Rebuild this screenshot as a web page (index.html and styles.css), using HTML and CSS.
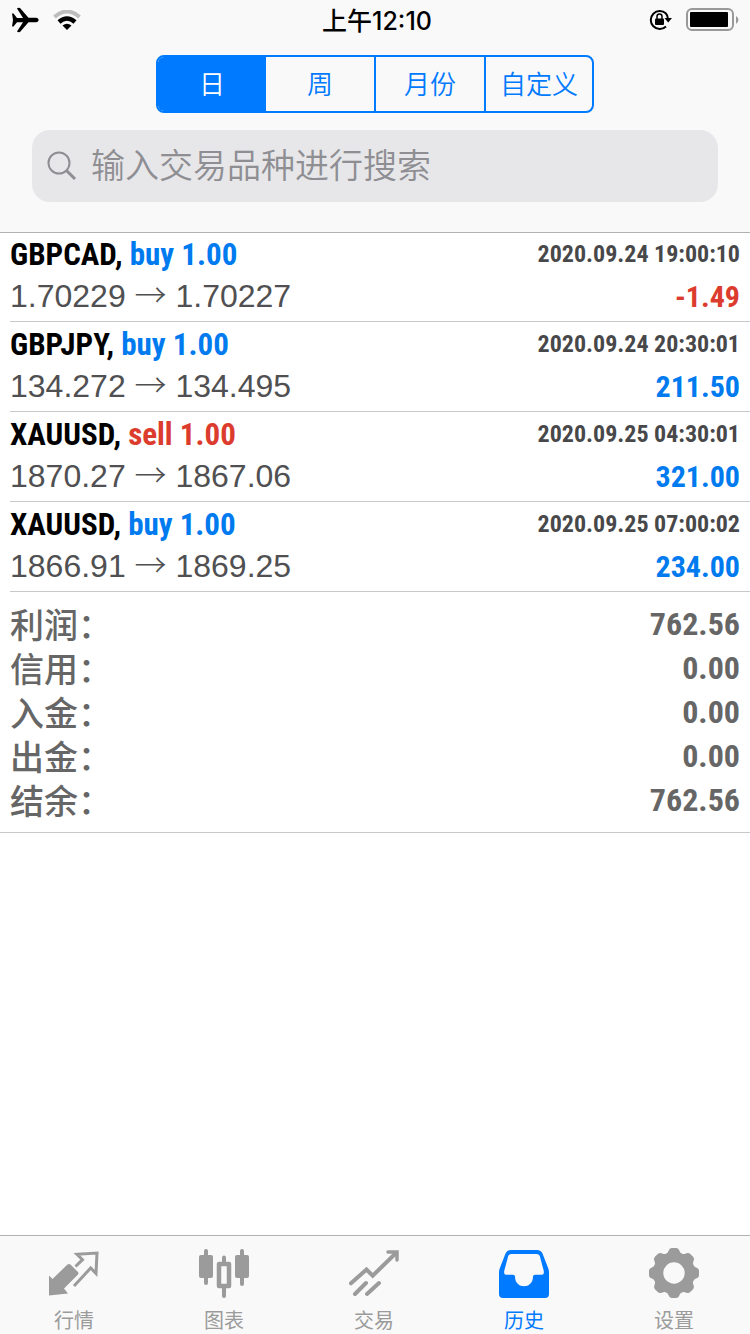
FILE: index.html
```html
<!DOCTYPE html>
<html lang="zh-CN">
<head>
<meta charset="utf-8">
<meta name="viewport" content="width=device-width, initial-scale=1">
<title>历史</title>
<link rel="stylesheet" href="styles.css">
</head>
<body>
<div class="app">
  <header class="header">
    <div class="status">
      <div class="status-left">
        <svg width="28" height="26" viewBox="0 0 28 26" aria-hidden="true"><path d="M1 6.500 2.500 6.500 6 11 12 11 6 1.500Q7 .5 9 1L17.500 10.800 25 10.800C28.500 11 28.500 15.200 25 15.300L17.500 15.300 9 25Q7 25.500 6 24.500L12 15.200 6 15.200 2.500 19.500 1 19.500 2 13Z"/></svg>
        <svg width="28" height="20" viewBox="0 0 28 20" fill="none" aria-hidden="true"><path d="M1.500 7Q14-4 26.500 7" stroke="#bdbdbd" stroke-width="4"/><path d="M6 12Q14 5 22 12" stroke="#000" stroke-width="4.500"/><path d="M9.500 15.500Q14 12 18.500 15.500L14 20Z" fill="#000"/></svg>
      </div>
      <time class="clock">上午12:10</time>
      <div class="status-right">
        <svg width="24" height="22" viewBox="0 0 24 22" aria-hidden="true"><path d="M18 4.500A9 9 0 1 0 18 17.500M17.500 4A9 9 0 0 1 20 10" fill="none" stroke="#000" stroke-width="2"/><path d="M16.500 9H24L20.200 13.500Z"/><rect x="7" y="9.500" width="9" height="6.500" rx="1"/><path d="M9 10V7.500a2.500 2.500 0 0 1 5 0V10" fill="none" stroke="#000" stroke-width="1.500"/></svg>
        <svg width="53" height="24" viewBox="0 0 53 24" aria-hidden="true"><rect x="1" y="1" width="46" height="21" rx="5" fill="none" stroke="#999" stroke-width="2"/><rect x="4" y="4" width="38" height="15" rx="1"/><path d="M50 8q5 3.500 0 8Z" fill="#999"/></svg>
      </div>
    </div>
    <div class="segments" role="group" aria-label="时间范围">
      <button class="segment segment-active" type="button">日</button>
      <button class="segment" type="button">周</button>
      <button class="segment" type="button">月份</button>
      <button class="segment" type="button">自定义</button>
    </div>
    <label class="search">
      <svg width="30" height="30" viewBox="0 0 30 30" fill="none" stroke="#8e8e93" stroke-width="2" aria-hidden="true"><circle cx="12" cy="12" r="10.500"/><path d="M19.500 19.500 28 28" stroke-width="3"/></svg>
      <input class="search-input" type="text" placeholder="输入交易品种进行搜索" aria-label="输入交易品种进行搜索">
    </label>
  </header>
  <main class="content">
    <ul class="deals">
      <li class="deal">
        <div class="line"><span class="symbol">GBPCAD, <span class="buy">buy 1.00</span></span><time class="date">2020.09.24 19:00:10</time></div>
        <div class="line"><span class="prices">1.70229 <span class="arrow">→</span> 1.70227</span><span class="amount loss">-1.49</span></div>
      </li>
      <li class="deal">
        <div class="line"><span class="symbol">GBPJPY, <span class="buy">buy 1.00</span></span><time class="date">2020.09.24 20:30:01</time></div>
        <div class="line"><span class="prices">134.272 <span class="arrow">→</span> 134.495</span><span class="amount">211.50</span></div>
      </li>
      <li class="deal">
        <div class="line"><span class="symbol">XAUUSD, <span class="sell">sell 1.00</span></span><time class="date">2020.09.25 04:30:01</time></div>
        <div class="line"><span class="prices">1870.27 <span class="arrow">→</span> 1867.06</span><span class="amount">321.00</span></div>
      </li>
      <li class="deal">
        <div class="line"><span class="symbol">XAUUSD, <span class="buy">buy 1.00</span></span><time class="date">2020.09.25 07:00:02</time></div>
        <div class="line"><span class="prices">1866.91 <span class="arrow">→</span> 1869.25</span><span class="amount">234.00</span></div>
      </li>
    </ul>
    <dl class="summary">
      <div class="total"><dt>利润：</dt><dd>762.56</dd></div>
      <div class="total"><dt>信用：</dt><dd>0.00</dd></div>
      <div class="total"><dt>入金：</dt><dd>0.00</dd></div>
      <div class="total"><dt>出金：</dt><dd>0.00</dd></div>
      <div class="total"><dt>结余：</dt><dd>762.56</dd></div>
    </dl>
  </main>
  <nav class="tabs">
    <a class="tab" href="#quotes">
      <svg width="50" height="50" viewBox="0 0 50 50" aria-hidden="true"><path d="M0 47.500V27.500L3.500 31 18.500 16.500Q20 15.500 21.500 16.500L29 24Q30 25.500 29 26.500L15 40.500 19 45.500Z" fill="currentColor"/><path d="M26.500 18.500 33.500 11.700 28 6.300 48 5 47 25.500 41.700 20 25 38" fill="none" stroke="currentColor" stroke-width="3"/></svg>
      <span>行情</span>
    </a>
    <a class="tab" href="#charts">
      <svg width="50" height="50" viewBox="0 0 50 50" aria-hidden="true"><g fill="currentColor"><rect y="7" width="14" height="23" rx="2"/><rect x="36" y="7" width="14" height="23" rx="2"/><rect x="5" y="1" width="4" height="36" rx="2"/><rect x="41" y="1" width="4" height="37" rx="2"/><rect x="23" y="7.500" width="4" height="9" rx="2"/><rect x="23" y="37" width="4" height="13" rx="2"/></g><rect x="20" y="16" width="10" height="22" fill="none" stroke="currentColor" stroke-width="4.500" stroke-linejoin="round"/></svg>
      <span>图表</span>
    </a>
    <a class="tab" href="#trade">
      <svg width="50" height="50" viewBox="0 0 50 50" fill="none" stroke="currentColor" stroke-width="4" stroke-linecap="round" aria-hidden="true"><path d="M2 35.300 17.500 21.500 23.700 27.700 47 5M6 46 17 35M18 46 30 35"/><path d="M39 4H48V12" stroke-width="3.500"/></svg>
      <span>交易</span>
    </a>
    <a class="tab tab-active" href="#history" aria-current="page">
      <svg width="50" height="50" viewBox="0 0 50 50" aria-hidden="true"><path fill="currentColor" fill-rule="evenodd" d="M12 2H38Q42 2 43.500 5.500L49.500 21Q50 23 50 25V46Q50 50 46 50H4Q0 50 0 46V25Q0 23 .5 21L6.500 5.500Q8 2 12 2ZM12.500 6Q10 6 9.200 8L5.200 23V24.500Q5 26.700 7 26.700H14Q16 26.700 16 28.500C16 41.500 34 41.500 34 28.500Q34 26.700 36 26.700H43Q45 26.700 44.800 24.500V23L40.800 8Q40 6 37.500 6Z"/></svg>
      <span>历史</span>
    </a>
    <a class="tab" href="#settings">
      <svg width="50" height="50" viewBox="0 0 50 50" aria-hidden="true"><circle cx="25" cy="25" r="15.700" fill="none" stroke="currentColor" stroke-width="10"/><g fill="currentColor"><path id="tooth" d="M16 6.500Q19 5 19.500 3Q20.500 0 23 0H27Q29.500 0 30.500 3Q31 5 34 6.500L30 11H20Z"/><use href="#tooth" transform="rotate(45 25 25)"/><use href="#tooth" transform="rotate(90 25 25)"/><use href="#tooth" transform="rotate(135 25 25)"/><use href="#tooth" transform="rotate(180 25 25)"/><use href="#tooth" transform="rotate(225 25 25)"/><use href="#tooth" transform="rotate(270 25 25)"/><use href="#tooth" transform="rotate(315 25 25)"/></g></svg>
      <span>设置</span>
    </a>
  </nav>
</div>
</body>
</html>
```
FILE: styles.css
```css
* { box-sizing: border-box; }
body {
  margin: 0;
  background: #fff;
  font-family: "Liberation Sans", "Noto Sans CJK SC", sans-serif;
}
svg { display: block; flex: none; }
.app {
  min-height: 100vh;
  display: flex;
  flex-direction: column;
}
.header {
  background: #f9f9f9;
  border-bottom: 1px solid #b2b2b2;
  padding-bottom: 30px;
}
.status {
  display: grid;
  grid-template-columns: 1fr auto 1fr;
  align-items: center;
  height: 40px;
  padding: 0 11px;
}
.status-left, .status-right {
  display: flex;
  align-items: center;
  gap: 14px;
}
.status-right { justify-content: flex-end; }
.clock {
  padding: 2px 0 0 4px;
  font: 500 25px/38px Inter, "Noto Sans CJK SC", sans-serif;
}
.segments {
  display: grid;
  grid-template-columns: 108fr 110fr 110fr 106fr;
  width: 438px;
  max-width: 100%;
  height: 58px;
  margin: 15px auto 17px;
  border: 2px solid #007aff;
  border-radius: 8px;
  overflow: hidden;
}
.segment {
  border: 0;
  border-right: 2px solid #007aff;
  padding: 0 0 2px;
  background: transparent;
  color: #007aff;
  font: 350 26px/50px "Noto Sans CJK SC", sans-serif;
}
.segment:first-child, .segment:last-child { border-right: 0; }
.segment-active { background: #007aff; color: #fff; }
.search {
  display: flex;
  align-items: center;
  gap: 14px;
  height: 72px;
  margin: 0 32px;
  padding: 0 15px;
  border-radius: 18px;
  background: #e7e7e9;
}
.search-input {
  flex: 1;
  min-width: 0;
  border: 0;
  padding: 0 0 4px;
  outline: 0;
  background: transparent;
  color: #000;
  font: 350 34px/48px "Noto Sans CJK SC", sans-serif;
}
.search-input::placeholder { color: #8e8e93; opacity: 1; }
.content { flex: 1; }
.deals { margin: 0; padding: 0 0 0 10px; list-style: none; }
.deal {
  height: 90px;
  padding: 1px 10px 0 0;
  border-bottom: 1px solid #c8c7cc;
}
.deal:first-child { height: 89px; padding-top: 0; }
.line {
  display: flex;
  justify-content: space-between;
  align-items: center;
  height: 42px;
  white-space: nowrap;
}
.symbol, .date, .amount, .total dd {
  font-family: "Roboto Condensed", Roboto, sans-serif;
  font-weight: 700;
}
.symbol { font-size: 31px; color: #000; }
.date { font-size: 24px; color: #48484a; }
.buy, .amount { color: #007aef; }
.sell, .amount.loss { color: #dc3c2d; }
.amount { font-size: 30px; }
.prices { font-size: 32px; color: #505052; }
.arrow { font-family: "Noto Sans CJK SC", sans-serif; font-weight: 300; line-height: 32px; }
.summary {
  margin: 0;
  padding: 10px;
  border-bottom: 1px solid #c8c7cc;
}
.total {
  display: flex;
  justify-content: space-between;
  align-items: center;
  height: 44px;
  color: #666;
}
.total dt {
  padding-top: 4px;
  font: 500 34px/40px "Liberation Sans", "Noto Sans CJK SC", sans-serif;
}
.total dd { margin: 0; font-size: 32px; }
.tabs {
  display: grid;
  grid-template-columns: repeat(5, 1fr);
  height: 99px;
  border-top: 1px solid #b2b2b2;
  background: #f9f9f9;
}
.tab {
  display: flex;
  flex-direction: column;
  align-items: center;
  gap: 8px;
  padding: 12px 2px 0 0;
  color: #9b9b9b;
  font: 400 20px/28px "Noto Sans CJK SC", sans-serif;
  text-decoration: none;
}
.tab-active { color: #007aff; }
```
